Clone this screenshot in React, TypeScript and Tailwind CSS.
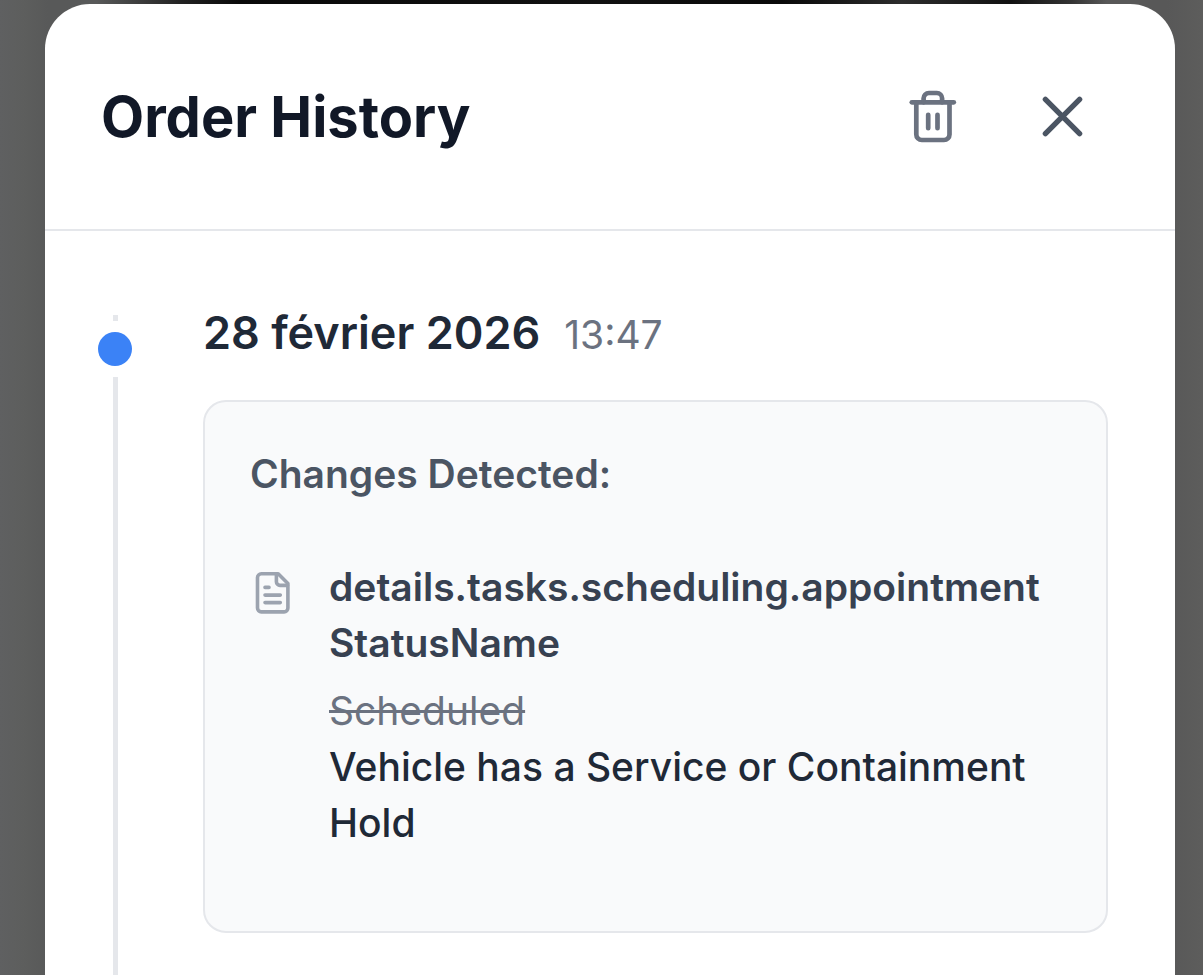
import React from "react";

const TrashIcon = () => {
  return (
    <svg
      viewBox="0 0 57 57"
      className="size-[57px]"
      fill="none"
      stroke="currentColor"
      strokeWidth="4.7"
      strokeLinecap="round"
      strokeLinejoin="round"
      aria-hidden="true"
    >
      <path d="M6.8 14.3H48.8" />
      <path d="M11.3 14.3V46.5a5.5 5.5 0 0 0 5.5 5.5H39a5.5 5.5 0 0 0 5.5-5.5V14.3" />
      <path d="M18.6 14.3V10.3a5.3 5.3 0 0 1 5.3-5.3H31.8a5.3 5.3 0 0 1 5.3 5.3V14.3" />
      <path d="M23.2 26.8V40.2M32.5 26.8V40.2" />
    </svg>
  );
};

const CloseIcon = () => {
  return (
    <svg
      viewBox="0 0 57 57"
      className="size-[57px]"
      fill="none"
      stroke="currentColor"
      strokeWidth="5.4"
      strokeLinecap="round"
      aria-hidden="true"
    >
      <path d="M11.4 11.4L45.6 45.6M45.6 11.4L11.4 45.6" />
    </svg>
  );
};

const DocumentIcon = () => {
  return (
    <svg
      viewBox="0 0 45 45"
      className="size-[45px] shrink-0"
      fill="none"
      stroke="currentColor"
      strokeWidth="3.6"
      strokeLinecap="round"
      strokeLinejoin="round"
      aria-hidden="true"
    >
      <path d="M11.3 2.8H28.2L37.9 12.5V37.1a3.8 3.8 0 0 1-3.8 3.8H11.3a3.8 3.8 0 0 1-3.8-3.8V6.6a3.8 3.8 0 0 1 3.8-3.8z" />
      <path d="M26.4 3.5V10.8a3.6 3.6 0 0 0 3.6 3.6H37.5" />
      <path d="M15 16.4H19M15 24.1H30.3M15 31.6H30.3" />
    </svg>
  );
};

const ModalHeader = () => {
  return (
    <header className="flex items-center justify-between border-b-2 border-gray-200 px-14 py-14">
      <h1 className="text-[56px] leading-[80px] font-bold text-[#111827]">
        Order History
      </h1>
      <div className="flex gap-4">
        <button
          type="button"
          aria-label="Clear history"
          className="p-7 text-[#6b7280]"
        >
          <TrashIcon />
        </button>
        <button
          type="button"
          aria-label="Close"
          className="p-7 text-[#4b5563]"
        >
          <CloseIcon />
        </button>
      </div>
    </header>
  );
};

const ChangesCard = () => {
  return (
    <div className="rounded-[23px] border-2 border-gray-200 bg-gray-50 px-[45px] pt-11 pb-20">
      <h3 className="text-[39px] leading-[56px] font-semibold text-[#4b5563]">
        Changes Detected:
      </h3>
      <div className="mt-[57px] flex gap-[34px]">
        <div className="pt-3 text-[#9ca3af]">
          <DocumentIcon />
        </div>
        <div className="min-w-0 flex-1 text-[39px] leading-[56px]">
          <p className="font-semibold break-words text-[#374151]">
            details.tasks.scheduling.appointmentStatusName
          </p>
          <p className="mt-3 text-[#6b7280] line-through">Scheduled</p>
          <p className="font-medium text-[#1f2937]">
            Vehicle has a Service or Containment Hold
          </p>
        </div>
      </div>
    </div>
  );
};

const TimelineEntry = () => {
  return (
    <li className="flex flex-1 gap-[71px]">
      <div className="flex w-[34px] shrink-0 flex-col items-center gap-[11px] pt-3">
        <span className="h-1.5 w-[5px] bg-gray-200" />
        <span className="size-[34px] rounded-full bg-[#3b82f6]" />
        <span className="w-[5px] flex-1 bg-gray-200" />
      </div>
      <div className="min-w-0 flex-1">
        <div className="mb-[35px] flex items-baseline gap-6 leading-[60px]">
          <h2 className="text-[45px] font-semibold text-[#1f2937]">
            28 février 2026
          </h2>
          <time dateTime="2026-02-28T13:47" className="text-[39px] text-[#6b7280]">
            13:47
          </time>
        </div>
        <ChangesCard />
      </div>
    </li>
  );
};

export default function App() {
  return (
    <div className="flex min-h-screen flex-col bg-[linear-gradient(90deg,#5f6061_0%,#5d5e5d_2%,#585959_4%,#585858_97%,#5d5d5c_100%)] font-['Inter',sans-serif]">
      <div className="h-1 bg-[linear-gradient(90deg,transparent_8%,#222_15%,#090909_20%,#111_50%,#090909_65%,#2c2c2c_75%,#111_84%,#333_89%,transparent_92%)]" />
      <section
        role="dialog"
        aria-label="Order History"
        className="mr-7 ml-[45px] flex flex-1 flex-col rounded-t-[45px] bg-white"
      >
        <ModalHeader />
        <ul className="flex flex-1 flex-col pt-[72px] pr-[67px] pl-[53px]">
          <TimelineEntry />
        </ul>
      </section>
    </div>
  );
}
